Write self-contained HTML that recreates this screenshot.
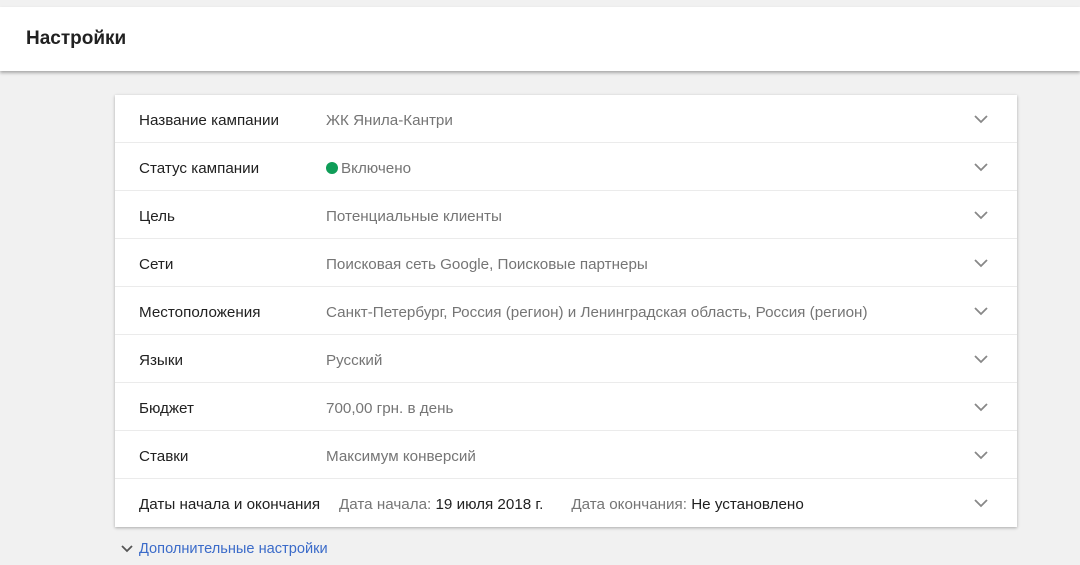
<!DOCTYPE html>
<html><head><meta charset="utf-8"><style>
body{margin:0;width:1080px;height:565px;background:#f1f1f1;font-family:"Liberation Sans",Arial,sans-serif;overflow:hidden;position:relative}
.top{position:absolute;left:0;top:7px;width:1080px;height:64px;background:#fff;box-shadow:0 2px 3px rgba(0,0,0,.3)}
.top h1{margin:0;position:absolute;left:26px;top:21px;font-size:19px;font-weight:bold;color:#212121}
.card{position:absolute;left:115px;top:95px;width:902px;background:#fff;box-shadow:0 1px 3px rgba(0,0,0,.3)}
.row{height:47px;border-bottom:1px solid #ebebeb;position:relative;font-size:15.2px}
.row:last-child{border-bottom:none;height:48px}
.l{position:absolute;left:24px;top:17px;color:#212121}
.v{position:absolute;left:211px;top:17px;color:#757575}
.v b{font-weight:normal;color:#212121}
.dot{display:inline-block;width:12px;height:12px;border-radius:50%;background:#0f9d58;vertical-align:-1px;margin-right:3px}
.ch{position:absolute;left:859px;top:20px}
.more{position:absolute;left:139px;top:541px;font-size:14.6px;color:#3b6bc9}
</style></head><body>
<div class="top"><h1>Настройки</h1></div>
<div class="card">
<div class="row"><span class="l">Название кампании</span><span class="v">ЖК Янила-Кантри</span><svg class="ch" width="14" height="9"><path d="M1 1l6 6 6-6" stroke="#888" stroke-width="1.8" fill="none"/></svg></div>
<div class="row"><span class="l">Статус кампании</span><span class="v"><span class="dot"></span>Включено</span><svg class="ch" width="14" height="9"><path d="M1 1l6 6 6-6" stroke="#888" stroke-width="1.8" fill="none"/></svg></div>
<div class="row"><span class="l">Цель</span><span class="v">Потенциальные клиенты</span><svg class="ch" width="14" height="9"><path d="M1 1l6 6 6-6" stroke="#888" stroke-width="1.8" fill="none"/></svg></div>
<div class="row"><span class="l">Сети</span><span class="v">Поисковая сеть Google, Поисковые партнеры</span><svg class="ch" width="14" height="9"><path d="M1 1l6 6 6-6" stroke="#888" stroke-width="1.8" fill="none"/></svg></div>
<div class="row"><span class="l">Местоположения</span><span class="v">Санкт-Петербург, Россия (регион) и Ленинградская область, Россия (регион)</span><svg class="ch" width="14" height="9"><path d="M1 1l6 6 6-6" stroke="#888" stroke-width="1.8" fill="none"/></svg></div>
<div class="row"><span class="l">Языки</span><span class="v">Русский</span><svg class="ch" width="14" height="9"><path d="M1 1l6 6 6-6" stroke="#888" stroke-width="1.8" fill="none"/></svg></div>
<div class="row"><span class="l">Бюджет</span><span class="v">700,00 грн. в день</span><svg class="ch" width="14" height="9"><path d="M1 1l6 6 6-6" stroke="#888" stroke-width="1.8" fill="none"/></svg></div>
<div class="row"><span class="l">Ставки</span><span class="v">Максимум конверсий</span><svg class="ch" width="14" height="9"><path d="M1 1l6 6 6-6" stroke="#888" stroke-width="1.8" fill="none"/></svg></div>
<div class="row"><span class="l">Даты начала и окончания</span><span class="v" style="left:224px">Дата начала: <b>19 июля 2018 г.</b><span style="margin-left:28px">Дата окончания: <b>Не установлено</b></span></span><svg class="ch" width="14" height="9"><path d="M1 1l6 6 6-6" stroke="#888" stroke-width="1.8" fill="none"/></svg></div>
</div>
<svg style="position:absolute;left:121px;top:545px" width="12" height="8"><path d="M1 1l5 5 5-5" stroke="#555" stroke-width="1.8" fill="none"/></svg>
<div class="more">Дополнительные настройки</div>
</body></html>
